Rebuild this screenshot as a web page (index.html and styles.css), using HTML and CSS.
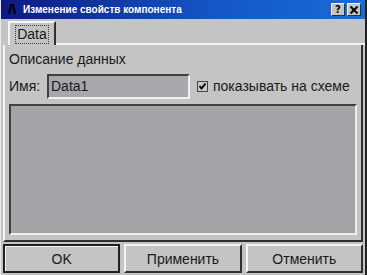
FILE: index.html
```html
<!DOCTYPE html>
<html lang="ru">
<head>
  <meta charset="UTF-8" />
  <title>Изменение свойств компонента</title>
  <link rel="stylesheet" href="styles.css">
</head>
<body>
  <div class="window">
    <div class="titlebar">
      <span class="app-icon">
        <svg width="8" height="11" viewBox="0 0 8 11"><path d="M1 10 L3 1 L5 1 L7 10" fill="none" stroke="#000" stroke-width="2"/></svg>
      </span>
      <span class="title">Изменение свойств компонента</span>
      <div class="caption-buttons">
        <button class="cap-btn">?</button>
        <button class="cap-btn">
          <svg width="8" height="8" viewBox="0 0 8 8"><path d="M0.5 0.5 L7.5 7.5 M7.5 0.5 L0.5 7.5" stroke="#000" stroke-width="2"/></svg>
        </button>
      </div>
    </div>

    <div class="tabs">
      <div class="tab"><span class="focus">Data</span></div>
      <div class="tab-rest"></div>
    </div>

    <div class="panel">
      <div class="group-title">Описание данных</div>
      <div class="name-row">
        <label for="name">Имя:</label>
        <input type="text" id="name" value="Data1">
        <span class="check">
          <svg width="11" height="11" viewBox="0 0 11 11"><rect x="0.5" y="0.5" width="10" height="10" fill="#c8c8c8" stroke="#444"/><path d="M2.5 5 L4.5 7.5 L8.5 2.5" fill="none" stroke="#000" stroke-width="2"/></svg>
        </span>
        <span class="check-label">показывать на схеме</span>
      </div>
      <div class="content-box"></div>
    </div>

    <div class="buttons">
      <button class="btn default">OK</button>
      <button class="btn">Применить</button>
      <button class="btn">Отменить</button>
    </div>
  </div>
</body>
</html>
```

FILE: styles.css
```css
body {
  margin: 0;
  background: #c4c4c4;
  font-family: "Liberation Sans", Arial, sans-serif;
  font-size: 13px;
  color: #1a1a1a;
}

.window {
  width: 367px;
  height: 275px;
  box-sizing: border-box;
  display: flex;
  flex-direction: column;
  background: #c4c4c4;
  border-right: 2px solid #202020;
  border-left: 1px solid #e8e8e8;
}

.titlebar {
  height: 19px;
  display: flex;
  align-items: center;
  background: linear-gradient(to right, #0c1a80, #1458c8 60%, #1a6ad8);
  color: #fff;
  padding: 0 4px 0 4px;
}

.app-icon {
  width: 14px;
  display: flex;
  justify-content: center;
}

.title {
  font-family: "Liberation Sans", Arial, sans-serif;
  font-weight: bold;
  font-size: 10px;
  margin-left: 4px;
  flex: 1;
}

.caption-buttons {
  display: flex;
  gap: 2px;
}

.cap-btn {
  width: 14px;
  height: 13px;
  padding: 0;
  border: 1px solid;
  border-color: #f0f0f0 #303030 #303030 #f0f0f0;
  background: #c4c4c4;
  font-family: "DejaVu Sans", sans-serif;
  font-weight: bold;
  font-size: 10px;
  line-height: 10px;
  display: flex;
  align-items: center;
  justify-content: center;
}

.tabs {
  display: flex;
  align-items: flex-end;
  height: 26px;
  padding-left: 7px;
}

.tab {
  width: 48px;
  height: 24px;
  box-sizing: border-box;
  border: 2px solid;
  border-color: #f4f4f4 #303030 transparent #f4f4f4;
  border-bottom: none;
  display: flex;
  align-items: center;
  justify-content: center;
  font-size: 14px;
}

.focus {
  border: 1px dotted #404040;
  padding: 0 1px;
  line-height: 17px;
}

.tab-rest {
  flex: 1;
  border-bottom: 2px solid #f4f4f4;
}

.panel {
  flex: 1;
  margin: 0 2px 0 2px;
  border-left: 2px solid #f4f4f4;
  border-right: 2px solid #303030;
  border-bottom: 2px solid #303030;
  display: flex;
  flex-direction: column;
  padding: 5px 4px 5px 4px;
}

.group-title {
  font-size: 14px;
  line-height: 18px;
}

.name-row {
  display: flex;
  align-items: center;
  margin-top: 5px;
  height: 26px;
}

.name-row label {
  font-size: 14px;
  width: 38px;
}

.name-row input {
  width: 143px;
  height: 25px;
  box-sizing: border-box;
  border: 2px solid;
  border-color: #404040 #f0f0f0 #f0f0f0 #404040;
  background: #a8a8ac;
  font-family: "Liberation Sans", Arial, sans-serif;
  font-size: 14px;
  padding: 0 2px;
  color: #1a1a1a;
}

.check {
  margin-left: 7px;
  display: flex;
}

.check-label {
  margin-left: 5px;
  font-size: 14px;
}

.content-box {
  flex: 1;
  margin-top: 5px;
  border: 2px solid;
  border-color: #404040 #f0f0f0 #f0f0f0 #404040;
  background: #a4a4a8;
}

.buttons {
  display: flex;
  gap: 4px;
  padding: 2px 2px 2px 2px;
  height: 33px;
  box-sizing: border-box;
}

.btn {
  flex: 1;
  border: 2px solid;
  border-color: #f4f4f4 #303030 #303030 #f4f4f4;
  background: #c4c4c4;
  font-family: "Liberation Sans", Arial, sans-serif;
  font-size: 14px;
  color: #1a1a1a;
}

.btn.default {
  border: 2px solid #202020;
  box-shadow: inset 1px 1px 0 #f4f4f4;
}
```
